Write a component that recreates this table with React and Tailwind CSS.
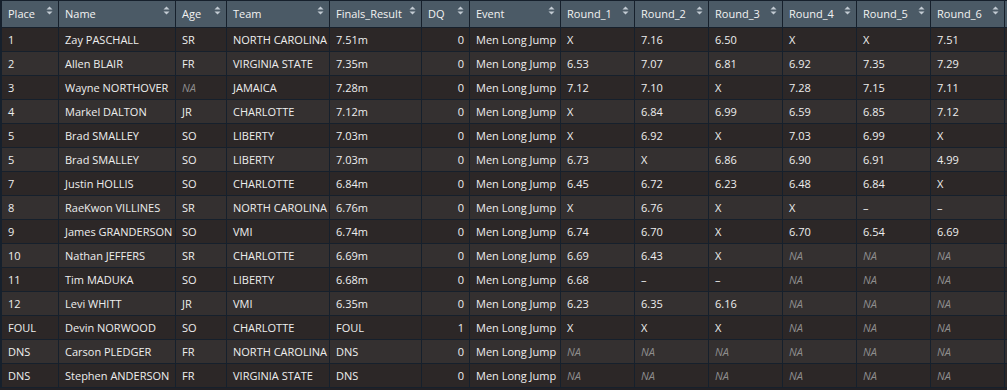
const columns = [
  { key: 'place', label: 'Place' },
  { key: 'name', label: 'Name' },
  { key: 'age', label: 'Age' },
  { key: 'team', label: 'Team' },
  { key: 'result', label: 'Finals_Result' },
  { key: 'dq', label: 'DQ', right: true },
  { key: 'event', label: 'Event' },
  { key: 'r1', label: 'Round_1' },
  { key: 'r2', label: 'Round_2' },
  { key: 'r3', label: 'Round_3' },
  { key: 'r4', label: 'Round_4' },
  { key: 'r5', label: 'Round_5' },
  { key: 'r6', label: 'Round_6' },
];

const raw = [
  '1|Zay PASCHALL|SR|NORTH CAROLINA|7.51m|0|X|7.16|6.50|X|X|7.51',
  '2|Allen BLAIR|FR|VIRGINIA STATE|7.35m|0|6.53|7.07|6.81|6.92|7.35|7.29',
  '3|Wayne NORTHOVER|NA|JAMAICA|7.28m|0|7.12|7.10|X|7.28|7.15|7.11',
  '4|Markel DALTON|JR|CHARLOTTE|7.12m|0|X|6.84|6.99|6.59|6.85|7.12',
  '5|Brad SMALLEY|SO|LIBERTY|7.03m|0|X|6.92|X|7.03|6.99|X',
  '5|Brad SMALLEY|SO|LIBERTY|7.03m|0|6.73|X|6.86|6.90|6.91|4.99',
  '7|Justin HOLLIS|SO|CHARLOTTE|6.84m|0|6.45|6.72|6.23|6.48|6.84|X',
  '8|RaeKwon VILLINES|SR|NORTH CAROLINA|6.76m|0|X|6.76|X|X|–|–',
  '9|James GRANDERSON|SO|VMI|6.74m|0|6.74|6.70|X|6.70|6.54|6.69',
  '10|Nathan JEFFERS|SR|CHARLOTTE|6.69m|0|6.69|6.43|X|NA|NA|NA',
  '11|Tim MADUKA|SO|LIBERTY|6.68m|0|6.68|–|–|NA|NA|NA',
  '12|Levi WHITT|JR|VMI|6.35m|0|6.23|6.35|6.16|NA|NA|NA',
  'FOUL|Devin NORWOOD|SO|CHARLOTTE|FOUL|1|X|X|X|NA|NA|NA',
  'DNS|Carson PLEDGER|FR|NORTH CAROLINA|DNS|0|NA|NA|NA|NA|NA|NA',
  'DNS|Stephen ANDERSON|FR|VIRGINIA STATE|DNS|0|NA|NA|NA|NA|NA|NA',
];

const rows = raw.map((line) => {
  const [place, name, age, team, result, dq, r1, r2, r3, r4, r5, r6] = line.split('|');
  return { place, name, age, team, result, dq, event: 'Men Long Jump', r1, r2, r3, r4, r5, r6 };
});

const gridCols = 'grid grid-cols-[59px_117px_51px_103px_92px_48px_91px_74px_74px_74px_74px_74px_74px_1fr]';

const SortIcon = () => (
  <svg width="7" height="9" viewBox="0 0 7 9" className="mt-[5px] shrink-0">
    <path d="M3.5 0.5 L6.5 3.5 L0.5 3.5 Z" fill="#c3cbd3" />
    <path d="M3.5 8.5 L6.5 5.5 L0.5 5.5 Z" fill="#c3cbd3" />
  </svg>
);

export default function App() {
  return (
    <div
      className="w-[1007px] h-[390px] overflow-hidden bg-[#222024] text-[11px] text-[#eeeeee]"
      style={{ fontFamily: '"Open Sans", "Noto Sans", sans-serif' }}
    >
      {/* Header */}
      <div className={`${gridCols} h-[28px] bg-[#4b5a66] border-t border-b border-[#16202c]`}>
        {columns.map((c, i) => (
          <div
            key={c.key}
            className={`flex justify-between pl-[6px] pr-[5px] border-r border-[#16202c] ${i === 0 ? 'border-l-2' : ''}`}
          >
            <span className="leading-[26px] text-[#f2f2f2]">{c.label}</span>
            <SortIcon />
          </div>
        ))}
        <div />
      </div>

      {/* Body */}
      {rows.map((r, ri) => (
        <div
          key={ri}
          className={`${gridCols} h-[24px] border-b border-[#16202c] ${ri % 2 === 0 ? 'bg-[#2c2727]' : 'bg-[#343030]'}`}
        >
          {columns.map((c, i) => {
            const v = r[c.key];
            const na = v === 'NA';
            return (
              <div
                key={c.key}
                className={`pl-[6px] pr-[5px] leading-[23px] whitespace-nowrap overflow-hidden border-r border-[#16202c] ${i === 0 ? 'border-l-2' : ''} ${c.right ? 'text-right' : ''} ${na ? 'italic text-[#8e8e8e]' : ''}`}
              >
                {v}
              </div>
            );
          })}
          <div />
        </div>
      ))}
    </div>
  );
}
